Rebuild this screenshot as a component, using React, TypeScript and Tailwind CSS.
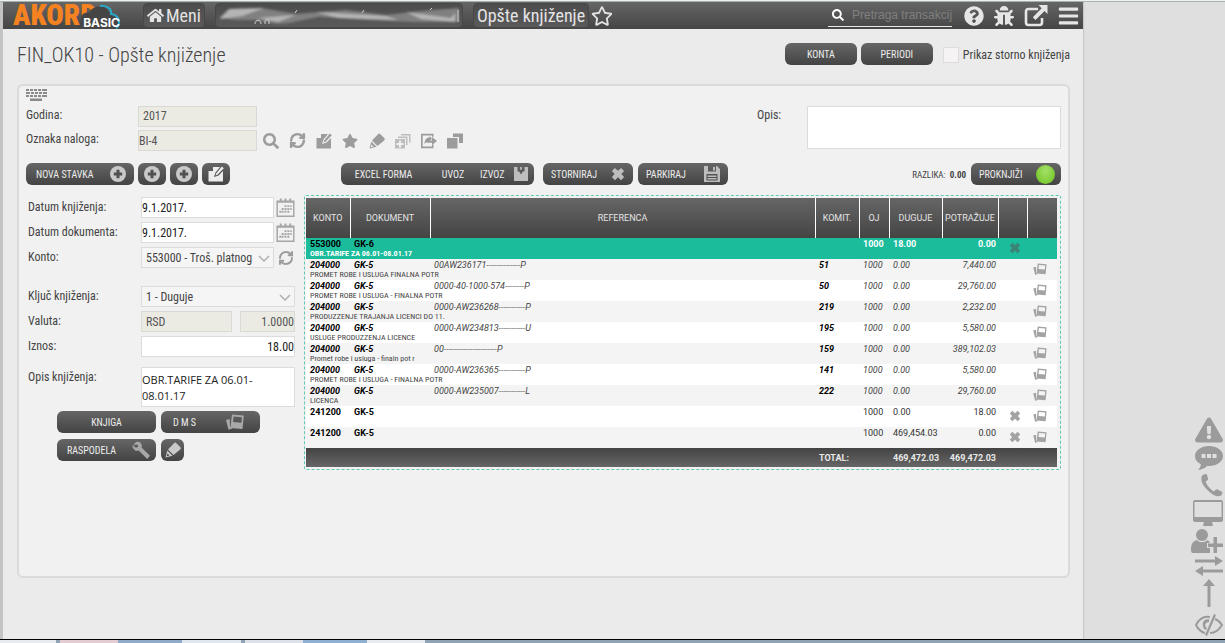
import type { ReactNode } from "react";
import { FaBars, FaBug, FaExclamationTriangle, FaHome, FaQuestionCircle, FaRegStar, FaSearch, FaStar } from "react-icons/fa";
import { LuRefreshCw } from "react-icons/lu";

const BTN =
  "flex h-[22px] items-center rounded-md bg-linear-to-b from-[#666666] to-[#444444] text-[10px] text-[#ececec] whitespace-nowrap";

const FIELD = "h-[21px] min-w-0 border border-[#dcdcdc] bg-white text-[12px] text-[#222222] outline-none";
const LOCKED = "h-[21px] min-w-0 border border-[#dadad4] bg-[#ebebe4] text-[12px] text-[#555555] outline-none";

function Svg({ box = "0 0 16 16", className, children }: { box?: string; className?: string; children: ReactNode }) {
  return (
    <svg viewBox={box} className={className} fill="currentColor" aria-hidden="true">
      {children}
    </svg>
  );
}

function PlusIcon() {
  return (
    <Svg className="size-4 text-[#c9c9c9]">
      <circle cx="8" cy="8" r="8" />
      <path d="M6.500 3.800h3v2.700h2.700v3H9.500v2.700h-3V9.500H3.800v-3h2.700z" fill="#505050" />
    </Svg>
  );
}

function EditIcon({ className = "size-4" }: { className?: string }) {
  return (
    <Svg className={className}>
      <path d="M5 1h7L7.500 6.500 6 11l4.500-1.500L15 5V15.500H.5V5H5z" />
      <path d="M13.800.5 15.800 2.300 9.500 8.800 7.500 9.500l.7-2z" />
    </Svg>
  );
}

function PencilIcon({ className = "size-4" }: { className?: string }) {
  return (
    <Svg className={className}>
      <path d="M9 1.200c.8-.8 1.600-.8 2.400 0l3.800 3.800c.8.8.8 1.600 0 2.400L8.500 13 3 7.500z" />
      <path fillRule="evenodd" d="M2.300 8.500 7.500 13.700.5 15.600zM2.500 11.500l-.8 2.800 2.800-.8z" />
    </Svg>
  );
}

function CrossIcon({ className = "size-3" }: { className?: string }) {
  return (
    <Svg className={className}>
      <path d="M4.500 1 8 4.200 11.500 1 15 4.500 11.800 8 15 11.500 11.500 15 8 11.800 4.500 15 1 11.500 4.200 8 1 4.500z" />
    </Svg>
  );
}

function PhotosIcon({ className }: { className: string }) {
  return (
    <Svg box="0 0 18 16" className={className}>
      <path d="M0 6 3.800 5 4 13l2.500 1.500L2.500 15.800z" />
      <path fillRule="evenodd" d="M6 .5 17.800 1.500 16.500 15 4.300 14zM7.600 2.500l-.6 5.500 8.400.7.5-5.500z" />
    </Svg>
  );
}

function CalendarIcon() {
  return (
    <Svg box="0 0 20 20" className="h-5 w-[19px] text-[#a5a5a5]">
      <path fillRule="evenodd" d="M.5 2H4V0h2v2h3V0h2v2h3V0h2v2h3.500v17.500H.5zM2 4.500V18h16V4.500z" />
      <path d="M9 7h2v2H9zm3 0h2v2h-2zm3 0h1.500v2H15zM6 10h2v2H6zm3 0h2v2H9zm3 0h2v2h-2zm3 0h1.500v2H15zM3.500 13h2v2h-2zM6 13h2v2H6zm3 0h2v2H9zm3 0h2v2h-2z" />
    </Svg>
  );
}

function FloppyIcon() {
  return (
    <Svg className="size-4 text-[#bdbdbd]">
      <path fillRule="evenodd" d="M0 0h13l3 3v13H0zM4 0v5.500h8V0zM2.500 8v6.500h11V8zM3.500 9.500h9V11h-9zm0 2.500h9v1.500h-9zM9 1h2v3.500H9z" />
    </Svg>
  );
}

function Logo() {
  return (
    <a href="#" className="relative flex h-[26px] w-[110px] items-center overflow-hidden">
      <span className="text-[29px] leading-none font-black text-[#f58220]">AKORD</span>
      <svg viewBox="0 0 50 26" className="absolute right-0 top-0 h-[26px] w-[50px]" aria-hidden="true">
        <path d="M8 18C7 11 12 9 16 10 19 2 33 1 36 9c6 0 12 7 10 16H6z" fill="#454545" />
        <path d="M27 3c8-1 12 4 11 8 5 0 9 5 8 9 0 3-1 4-3 5" fill="none" stroke="#2aa7c9" strokeWidth="2" />
      </svg>
      <span className="absolute right-[3px] bottom-0 font-[Inter] text-[12px] leading-none font-bold text-white">BASIC</span>
    </a>
  );
}

function Header() {
  const box = "flex h-[25px] items-center rounded-sm border border-[#474747] bg-linear-to-b from-[#4c4c4c] to-[#5a5a5a] text-[18px] text-[#e4e4e4]";
  return (
    <header className="flex h-[27px] items-center bg-linear-to-b from-[#666666] to-[#454545] pl-2.5 pr-1">
      <Logo />
      <button className={`${box} ml-5 gap-0.5 px-[3px]`}>
        <FaHome className="size-[17px]" />
        Meni
      </button>
      <div className={`${box} ml-2.5 w-[248px] overflow-hidden`}>
        <svg viewBox="0 0 246 24" className="h-6 w-full" aria-hidden="true">
          <defs>
            <filter id="smear">
              <feGaussianBlur stdDeviation="1" />
            </filter>
          </defs>
          <g filter="url(#smear)">
            <path d="M3 14 12 5 45 4l35 6 50-4 40 5 35-4 38-3v14l-45 0-45-2-50-3-30 6-12 1-22-4-20 0z" fill="#808080" />
            <path d="M4 15 14 5l34-1-22 8zM42 14l38-3-18 7zM100 8l70 4 12 4-60-2zM190 8l45 6 4-5v9l-34-3z" fill="#b5b5b5" />
          </g>
          <path d="M39 20c0-5 6-5 6 0m4 0v-3c1-2 4-2 4 0v3M79 9l2-3m65 3 2-3m66 0 2-2m26 14V6" stroke="#d0d0d0" fill="none" />
        </svg>
      </div>
      <button className={`${box} ml-2.5 px-[3px]`}>Opšte knjiženje</button>
      <button className="ml-0.5" aria-label="Omiljeno">
        <FaRegStar className="size-[22px] text-[#e4e4e4]" />
      </button>
      <label className="ml-auto flex h-[23px] w-[124px] items-center gap-2 border-b border-[#e8e8e8] pl-1">
        <FaSearch className="size-3 shrink-0 text-white" />
        <input
          aria-label="Pretraga"
          placeholder="Pretraga transakcija"
          className="min-w-0 flex-1 bg-transparent font-[Liberation_Sans] text-[12px] outline-none placeholder:text-[#808080]"
        />
      </label>
      <nav className="ml-3 flex items-center gap-2.5 text-[#e6e6e6]">
        <button aria-label="Pomoć"><FaQuestionCircle className="size-5" /></button>
        <button aria-label="Prijavi grešku"><FaBug className="size-5" /></button>
        <button aria-label="Otvori">
          <Svg box="0 0 24 22" className="h-[22px] w-6">
            <path d="M14 4H4.500Q2 4 2 6.500v11Q2 20 4.500 20h11q2.500 0 2.500-2.500V13" fill="none" stroke="currentColor" strokeWidth="2.600" />
            <path d="M14.500 0H23.500V9L20.500 6 11.500 15 8.800 12.300 17.700 3.200z" />
          </Svg>
        </button>
        <button aria-label="Meni"><FaBars className="h-[22px] w-[21px]" /></button>
      </nav>
    </header>
  );
}

function Tools() {
  const items: [string, ReactNode][] = [
    ["Pretraga", <FaSearch className="size-4" />],
    ["Osveži", <LuRefreshCw className="size-[17px]" strokeWidth={3.5} />],
    ["Izmeni", <EditIcon />],
    ["Omiljeno", <FaStar className="size-4" />],
    ["Olovka", <PencilIcon />],
    ["Dodaj kopiju", (
      <Svg className="size-4 opacity-60">
        <path fillRule="evenodd" d="M0 6h10v9.500H0zM4 7.500V10H1.500v2H4v2.500h2V12h2.500v-2H6V7.500z" />
        <path d="M3 3.500h9.500V12H11V5H3zM6 1h9.500v8.500H14v-7H6z" />
      </Svg>
    )],
    ["Izvezi", (
      <Svg className="size-4">
        <path d="M0 .8h12.500v3H11V2.500H1.700v11H11V11.500h1.500v3.700H0z" />
        <path d="M11 4l5 4-5 4V9.800H5.500V7.500H11zM3.500 11C3.500 6 6 4.500 8.500 4.500V3L11 5.500 8.500 8C6.500 8 5 9 3.500 11z" />
      </Svg>
    )],
    ["Kopiraj", (
      <Svg className="size-4">
        <path d="M0 5h10.500v10.500H0zM6 .5h10V10h-4V4H6z" />
      </Svg>
    )],
  ];
  return (
    <div className="flex w-[200px] items-center justify-between text-[#9c9c9c]">
      {items.map(([name, icon]) => (
        <button key={name} aria-label={name}>{icon}</button>
      ))}
    </div>
  );
}

function Row({ label, id, children }: { label: string; id: string; children: ReactNode }) {
  return (
    <div className="flex">
      <label htmlFor={id} className="w-[113px] shrink-0 leading-5">{label}</label>
      <div className="flex w-[154px] items-center">{children}</div>
    </div>
  );
}

function Select({ id, value, className }: { id: string; value: string; className: string }) {
  return (
    <div className={`relative ${className}`}>
      <select id={id} className="h-[21px] w-full appearance-none border border-[#dcdcdc] bg-[#f5f5f5] pr-5 pl-1 text-[12px] text-[#444444]">
        <option>{value}</option>
      </select>
      <svg viewBox="0 0 12 7" className="absolute top-2 right-1 h-[7px] w-3" fill="none" stroke="#b0b0b0" strokeWidth="1.500" aria-hidden="true">
        <path d="m1 1 5 5 5-5" />
      </svg>
    </div>
  );
}

function EntryForm() {
  return (
    <div className="flex w-[278px] shrink-0 flex-col gap-1 pt-0.5 pl-0.5">
      <Row label="Datum knjiženja:" id="datum">
        <input id="datum" defaultValue="9.1.2017." className={`${FIELD} w-[133px]`} />
        <button className="ml-0.5" aria-label="Kalendar"><CalendarIcon /></button>
      </Row>
      <Row label="Datum dokumenta:" id="datum-dok">
        <input id="datum-dok" defaultValue="9.1.2017." className={`${FIELD} w-[133px]`} />
        <button className="ml-0.5" aria-label="Kalendar"><CalendarIcon /></button>
      </Row>
      <Row label="Konto:" id="konto">
        <Select id="konto" value="553000 - Troš. platnog prometa" className="w-[133px]" />
        <button className="ml-1 text-[#9c9c9c]" aria-label="Osveži konto">
          <LuRefreshCw className="size-4" strokeWidth={3} />
        </button>
      </Row>
      <div className="mt-[14px]">
        <Row label="Ključ knjiženja:" id="kljuc">
          <Select id="kljuc" value="1 - Duguje" className="w-full" />
        </Row>
      </div>
      <Row label="Valuta:" id="valuta">
        <input id="valuta" readOnly defaultValue="RSD" className={`${LOCKED} w-[91px] pl-1`} />
        <input aria-label="Kurs" readOnly defaultValue="1.0000" className={`${LOCKED} ml-2 flex-1 text-right`} />
      </Row>
      <Row label="Iznos:" id="iznos">
        <input id="iznos" defaultValue="18.00" className={`${FIELD} w-full text-right`} />
      </Row>
      <div className="mt-1.5">
        <Row label="Opis knjiženja:" id="opis-knj">
          <textarea
            id="opis-knj"
            defaultValue="OBR.TARIFE ZA 06.01-08.01.17"
            className="block h-10 w-full resize-none overflow-hidden border border-[#dcdcdc] bg-white pt-1 font-[Open_Sans] text-[11px] leading-4 text-[#222222]"
          />
        </Row>
      </div>
      <div className="ml-[29px] grid w-[203px] grid-cols-2 gap-x-[5px] gap-y-1.5 self-start">
        <button className={`${BTN} justify-center`}>KNJIGA</button>
        <button className={`${BTN} justify-between pr-4 pl-3`}>
          <span>D M S</span>
          <PhotosIcon className="h-4 w-[18px] text-[#a8a8a8]" />
        </button>
        <button className={`${BTN} justify-between pr-1.5 pl-2.5`}>
          RASPODELA
          <Svg className="size-[18px] text-[#a8a8a8]">
            <path d="M1 3.500 3.500 1C7-.3 9.500 3 8.500 5.800L16 13.200 13.500 16 6 8.500C3 9.500 0 7 .5 3.500l3 2.500L5.500 5 5 3z" />
          </Svg>
        </button>
        <button className={`${BTN} w-[23px] justify-center`} aria-label="Izmeni raspodelu">
          <PencilIcon className="size-4 text-[#c9c9c9]" />
        </button>
      </div>
    </div>
  );
}

type Item = {
  konto: string;
  dok: string;
  opis?: string;
  ref?: string;
  komit?: string;
  duguje: string;
  potrazuje: string;
  kind?: "active" | "manual";
};

const ITEMS: Item[] = [
  { konto: "553000", dok: "GK-6", opis: "OBR.TARIFE ZA 06.01-08.01.17", duguje: "18.00", potrazuje: "0.00", kind: "active" },
  { konto: "204000", dok: "GK-5", opis: "PROMET ROBE I USLUGA FINALNA POTR", ref: "00AW236171--------------P", komit: "51", duguje: "0.00", potrazuje: "7,440.00" },
  { konto: "204000", dok: "GK-5", opis: "PROMET ROBE I USLUGA - FINALNA POTR", ref: "0000-40-1000-574--------P", komit: "50", duguje: "0.00", potrazuje: "29,760.00" },
  { konto: "204000", dok: "GK-5", opis: "PRODUZZENJE TRAJANJA LICENCI DO 11.", ref: "0000-AW236268-----------P", komit: "219", duguje: "0.00", potrazuje: "2,232.00" },
  { konto: "204000", dok: "GK-5", opis: "USLUGE PRODUZZENJA LICENCE", ref: "0000-AW234813-----------U", komit: "195", duguje: "0.00", potrazuje: "5,580.00" },
  { konto: "204000", dok: "GK-5", opis: "Promet robe i usluga - finaln pot r", ref: "00----------------------P", komit: "159", duguje: "0.00", potrazuje: "389,102.03" },
  { konto: "204000", dok: "GK-5", opis: "PROMET ROBE I USLUGA - FINALNA POTR", ref: "0000-AW236365-----------P", komit: "141", duguje: "0.00", potrazuje: "5,580.00" },
  { konto: "204000", dok: "GK-5", opis: "LICENCA", ref: "0000-AW235007-----------L", komit: "222", duguje: "0.00", potrazuje: "29,760.00" },
  { konto: "241200", dok: "GK-5", duguje: "0.00", potrazuje: "18.00", kind: "manual" },
  { konto: "241200", dok: "GK-5", duguje: "469,454.03", potrazuje: "0.00", kind: "manual" },
];

function rowTone(item: Item) {
  if (item.kind === "active") return "bg-[#1abc9c] font-bold text-white";
  if (item.kind === "manual") return "odd:bg-white even:bg-[#f4f4f4] text-[#333333]";
  return "odd:bg-[#ffffff] even:bg-[#f4f4f4] italic text-[#444444]";
}

function Ledger() {
  const th = "border-r border-white p-0 font-normal last:border-r-0";
  return (
    <div className="min-w-0 flex-1 self-start rounded-xs border border-dashed border-[#5fc9b3] py-0.5 pr-[3px] pl-px">
      <table className="w-full table-fixed border-collapse font-[Roboto] text-[9px] leading-3">
        <colgroup>
          <col className="w-11" />
          <col className="w-20" />
          <col />
          <col className="w-11" />
          <col className="w-[30px]" />
          <col className="w-[53px]" />
          <col className="w-14" />
          <col className="w-[29px]" />
          <col className="w-[30px]" />
        </colgroup>
        <thead>
          <tr className="h-10 bg-linear-to-b from-[#666666] to-[#444444] text-[#e4e4e4]">
            <th className={th}>KONTO</th>
            <th className={th}>DOKUMENT</th>
            <th className={th}>REFERENCA</th>
            <th className={th}>KOMIT.</th>
            <th className={th}>OJ</th>
            <th className={th}>DUGUJE</th>
            <th className={th}>POTRAŽUJE</th>
            <th className={th} aria-label="Brisanje" />
            <th className={th} aria-label="Dokumenti" />
          </tr>
        </thead>
        <tbody>
          {ITEMS.map((item, i) => (
            <tr key={i} className={`h-[21px] align-top whitespace-nowrap ${rowTone(item)}`}>
              <td className="p-0 pl-1">
                <div className="font-bold text-black">{item.konto}</div>
                <div className="h-2 font-['Roboto_Condensed'] text-[8px] leading-2 not-italic">{item.opis}</div>
              </td>
              <td className="pl-1 font-bold text-black">{item.dok}</td>
              <td className="pl-1">{item.ref}</td>
              <td className="pl-1 font-bold text-black">{item.komit}</td>
              <td className="pl-1">1000</td>
              <td className="pl-1">{item.duguje}</td>
              <td className="pr-0.5 text-right">{item.potrazuje}</td>
              <td className="pt-1">
                {item.kind && (
                  <button className="ml-[11px] block" aria-label="Obriši">
                    <CrossIcon className={item.kind === "active" ? "size-3 text-[#3d8377]" : "size-3 text-[#a3a3a3]"} />
                  </button>
                )}
              </td>
              <td className="pt-1">
                {item.kind !== "active" && (
                  <button className="ml-1.5 block text-[#a3a3a3]" aria-label="Dokument">
                    <PhotosIcon className="h-3 w-3.5" />
                  </button>
                )}
              </td>
            </tr>
          ))}
        </tbody>
        <tfoot>
          <tr className="h-[19px] bg-linear-to-b from-[#444444] to-[#666666] font-bold text-[#e8e8e8]">
            <td colSpan={3} />
            <td className="pl-1">TOTAL:</td>
            <td />
            <td className="pl-1">469,472.03</td>
            <td className="pr-0.5 text-right">469,472.03</td>
            <td colSpan={2} />
          </tr>
        </tfoot>
      </table>
    </div>
  );
}

function Toolbar() {
  return (
    <div className="mt-3 flex items-start gap-1">
      <button className={`${BTN} w-[108px] justify-between pr-2 pl-2.5`}>NOVA STAVKA <PlusIcon /></button>
      <button className={`${BTN} w-7 justify-center`} aria-label="Dodaj"><PlusIcon /></button>
      <button className={`${BTN} w-7 justify-center`} aria-label="Dodaj grupu"><PlusIcon /></button>
      <button className={`${BTN} w-7 justify-center text-[#bdbdbd]`} aria-label="Izmeni stavku"><EditIcon /></button>
      <div className="ml-[107px] flex">
        <button className={`${BTN} w-[85px] justify-center rounded-r-none`}>EXCEL FORMA</button>
        <button className={`${BTN} w-[54px] justify-center rounded-none`}>UVOZ</button>
        <button className={`${BTN} w-[54px] justify-between rounded-l-none pr-1.5`}>
          IZVOZ
          <Svg className="size-3.5 text-[#bdbdbd]">
            <path d="M0 0h4v5h2L8 8.500 10 5h2V0h4v16H0z" />
            <path d="M7 0h2v3H7z" />
          </Svg>
        </button>
      </div>
      <div className="ml-[5px] flex gap-[5px]">
        <button className={`${BTN} w-[90px] justify-between px-2`}>
          STORNIRAJ <CrossIcon className="size-3.5 text-[#bdbdbd]" />
        </button>
        <button className={`${BTN} w-[90px] justify-between px-2`}>PARKIRAJ <FloppyIcon /></button>
      </div>
      <p className="ml-auto pr-px text-[9px] leading-6 text-[#444444]">RAZLIKA:&nbsp; <b>0.00</b></p>
      <button className={`${BTN} w-[90px] justify-between pr-1.5 pl-2`}>
        PROKNJIŽI
        <span className="size-[19px] rounded-full bg-radial-[at_50%_30%] from-[#a5e06a] to-[#6cc21c]" />
      </button>
    </div>
  );
}

function SideIcons() {
  return (
    <nav className="flex flex-col items-end gap-[3px] pr-0.5 text-[#9b9b9b]" aria-label="Prečice">
      <a href="#" aria-label="Upozorenja"><FaExclamationTriangle className="h-[26px] w-7" /></a>
      <a href="#" aria-label="Poruke">
        <Svg box="0 0 28 24" className="h-6 w-7">
          <path fillRule="evenodd" d="M14 0c8 0 14 4.500 14 10s-6 10-14 10h-2c-2 2-5 3.500-9 4 2-2 3-4 2.800-5.800C2 16.300 0 13.500 0 10 0 4.500 6 0 14 0zM6.500 8v4h4V8zM12 8v4h4V8zm5.500 0v4h4V8z" />
        </Svg>
      </a>
      <a href="#" aria-label="Pozovi">
        <Svg box="0 0 24 24" className="size-6">
          <path d="M3 2.500 6 1q1.500-.5 2 1l1 3.500q.3 1.500-1 2L6.500 8.500Q9 15 15 18.500l1.500-1.500q1-1 2.200-.5l3.800 2q1.300.7.700 2l-1 2Q17 25 10 18.500 0 10 3 2.500z" />
        </Svg>
      </a>
      <a href="#" aria-label="Ekran">
        <Svg box="0 0 30 26" className="h-[26px] w-[30px]">
          <path fillRule="evenodd" d="M2 0h26q2 0 2 2v18q0 2-2 2h-9l1 4H10l1-4H2q-2 0-2-2V2q0-2 2-2zm-.5 2v15h27V2z" />
        </Svg>
      </a>
      <a href="#" aria-label="Dodaj korisnika">
        <Svg box="0 0 32 24" className="h-6 w-8">
          <circle cx="11" cy="6" r="6" />
          <path d="M6 11c2 3 8 3 10 0l2.500 1.500V14H16v5h3v5H2c-2 0-2-2-2-4 0-5 2-8 6-9zM22.500 8h3.500v6.500h6V18h-6v6h-3.500v-6H17v-3.500h5.500z" />
        </Svg>
      </a>
      <a href="#" aria-label="Zameni">
        <Svg box="0 0 28 20" className="h-5 w-7">
          <path d="M0 3.500h20V0l8 5-8 5V6.500H0zM28 13.500H8V10l-8 5 8 5v-3.500h20z" />
        </Svg>
      </a>
      <a href="#" className="mr-2" aria-label="Na vrh">
        <Svg box="0 0 12 28" className="h-7 w-3">
          <path d="M6 0l6 7H7.500v21h-3V7H0z" />
        </Svg>
      </a>
      <a href="#" className="mt-1" aria-label="Sakrij">
        <Svg box="0 0 28 22" className="h-[22px] w-7">
          <path d="M15 3C9 2 4 5 1 11c2 4 5 7 9 8M20 5c3 1 5 3 7 6-3 5-7 8-12 8" fill="none" stroke="currentColor" strokeWidth="2" />
          <path d="M19 0l2 1L12 22l-2-1zM14 5c-5 0-7 3-6 7 0 2 1 3 3 4l1-2c-3-2-2-6 2-6z" />
        </Svg>
      </a>
    </nav>
  );
}

export default function App() {
  return (
    <div className="flex min-h-screen flex-col bg-[#dfdfdf] font-['Roboto_Condensed','Liberation_Sans_Narrow',Roboto,sans-serif] text-[12px] text-[#444444]">
      <div className="h-0.5 border-b border-[#a9b3b0] bg-[#eef2f2]" />
      <div className="flex flex-1">
        <div className="flex min-w-0 flex-1 flex-col border-l-[3px] border-[#c4c4c4] bg-[#ebebeb] shadow-sm">
          <Header />
          <main className="pr-[13px] pb-15 pl-3.5">
            <div className="flex h-[55px] items-start">
              <h1 className="mr-auto pt-3 text-[20px] leading-7 font-light">FIN_OK10 - Opšte knjiženje</h1>
              <button className={`${BTN} mt-3.5 w-18 justify-center`}>KONTA</button>
              <button className={`${BTN} mt-3.5 ml-1 w-18 justify-center`}>PERIODI</button>
              <label className="mt-[18px] ml-2.5 flex items-center gap-1 leading-4">
                <input type="checkbox" className="size-4 appearance-none border border-[#e0dcdc] bg-[#f5f3f3]" />
                Prikaz storno knjiženja
              </label>
            </div>
            <section className="min-h-[494px] rounded-md border-2 border-[#dadada] bg-[#f1f1f1] px-[7px] pt-[3px]">
              <Svg box="0 0 21 12" className="h-3 w-[21px] text-[#8a8a8a]">
                <path d="M0 0h3v2H0zm4 0h3v2H4zm4 0h3v2H8zm4 0h3v2h-3zm4 0h5v2h-5zM0 3h4v2H0zm5 0h3v2H5zm4 0h3v2H9zm4 0h3v2h-3zm4 0h4v2h-4zM0 6h3v2H0zm4 0h3v2H4zm4 0h3v2H8zm4 0h3v2h-3zm4 0h5v2h-5zM4 9.500h12V12H4z" />
              </Svg>
              <div className="mt-[5px] flex items-start justify-between">
                <div className="flex flex-col gap-[3px]">
                  <div className="flex">
                    <label htmlFor="godina" className="w-28 leading-[18px]">Godina:</label>
                    <input id="godina" readOnly defaultValue="2017" className={`${LOCKED} w-[119px] pb-0.5 pl-1`} />
                  </div>
                  <div className="flex">
                    <label htmlFor="nalog" className="w-28 leading-[18px]">Oznaka naloga:</label>
                    <input id="nalog" readOnly defaultValue="BI-4" className={`${LOCKED} mr-1.5 w-[119px]`} />
                    <Tools />
                  </div>
                </div>
                <div className="flex">
                  <label htmlFor="opis" className="w-[50px] leading-[18px]">Opis:</label>
                  <textarea id="opis" className="h-[43px] w-[254px] resize-none border border-[#dcdcdc] bg-white" />
                </div>
              </div>
              <Toolbar />
              <div className="mt-2 flex">
                <EntryForm />
                <Ledger />
              </div>
            </section>
          </main>
        </div>
        <aside className="flex w-[142px] flex-col justify-end border-l border-[#c8c8c8] pb-[3px]">
          <SideIcons />
        </aside>
      </div>
      <footer className="flex h-1 border-t border-black bg-[#8fa3b5]">
        <div className="w-14 bg-[#e8ebef]" />
        <div className="ml-1 w-[58px] bg-[#e3ccd2]" />
        <div className="w-16 bg-[#8fabc9]" />
        <div className="w-[59px] bg-[#dfe8ef]" />
        <div className="ml-1 w-[58px] bg-[#dde1e8]" />
        <div className="w-16 bg-[#8fb0d0]" />
        <div className="w-[58px] bg-[#e8ebef]" />
      </footer>
    </div>
  );
}
